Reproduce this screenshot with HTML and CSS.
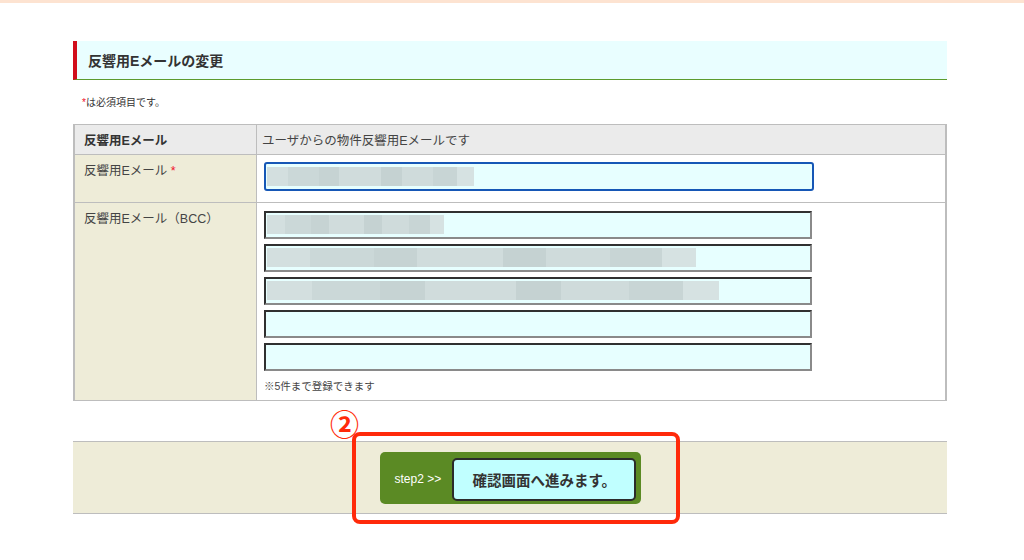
FILE: index.html
```html
<!DOCTYPE html>
<html lang="ja">
<head>
    <meta charset="UTF-8">
    <meta name="viewport" content="width=device-width, initial-scale=1.0">
    <title>反響用Eメールの変更</title>
    <link rel="stylesheet" href="styles.css">
</head>
<body>
    <div class="top-band"></div>
    <div class="page">
        <h2 class="section-title">反響用Eメールの変更</h2>
        <p class="note"><span class="req">*</span>は必須項目です。</p>

        <table class="form-table">
            <tr class="head-row">
                <th>反響用Eメール</th>
                <td>ユーザからの物件反響用Eメールです</td>
            </tr>
            <tr class="main-row">
                <th>反響用Eメール <span class="req">*</span></th>
                <td>
                    <div class="field focused"><span class="blur" style="width: 207px"></span></div>
                </td>
            </tr>
            <tr>
                <th>反響用Eメール（BCC）</th>
                <td>
                    <div class="bcc-list">
                        <div class="field"><span class="blur" style="width: 177px"></span></div>
                        <div class="field"><span class="blur" style="width: 429px"></span></div>
                        <div class="field"><span class="blur" style="width: 452px"></span></div>
                        <div class="field"></div>
                        <div class="field"></div>
                    </div>
                    <p class="small">※5件まで登録できます</p>
                </td>
            </tr>
        </table>

        <div class="submit-area">
            <div class="step-box">
                <span class="step-label">step2 &gt;&gt;</span>
                <button class="confirm-btn">確認画面へ進みます。</button>
            </div>
        </div>

        <!-- annotation -->
        <span class="mark-num">②</span>
        <div class="mark-box"></div>
    </div>
</body>
</html>
```

FILE: styles.css
```css
body {
    margin: 0;
    background-color: #fff;
    color: #333;
    font-family: "Liberation Sans", "Noto Sans CJK JP", sans-serif;
}

.top-band {
    height: 3px;
    background-color: #fde3d1;
}

.page {
    position: relative;
    width: 874px;
    margin-left: 73px;
    padding-top: 38px;
    padding-bottom: 40px;
}

.section-title {
    margin: 0;
    height: 38px;
    line-height: 40px;
    padding-left: 11px;
    font-size: 14px;
    font-weight: bold;
    color: #333;
    background-color: #e9feff;
    border-left: 4px solid #d10d1b;
    border-bottom: 1px solid #5c9b2d;
}

.note {
    margin: 15px 0 0 9px;
    font-size: 10px;
    line-height: 16px;
    color: #333;
}

.req {
    color: #f0102a;
}

.form-table {
    width: 100%;
    margin-top: 13px;
    border-collapse: collapse;
    font-size: 12.5px;
    border-left: 2px solid #bdbdbd;
    border-right: 2px solid #bdbdbd;
}

.form-table th,
.form-table td {
    border: 1px solid #bdbdbd;
    text-align: left;
    vertical-align: top;
}

.form-table th {
    width: 163px;
    padding: 5px 9px 0 9px;
    font-weight: normal;
    background-color: #eeecd8;
    color: #444;
}

.form-table td {
    padding: 7px 8px 7px 7px;
    background-color: #fff;
}

.main-row td {
    padding-bottom: 11px;
}

.head-row th,
.head-row td {
    height: 29px;
    padding: 0 9px;
    vertical-align: middle;
    background-color: #ebebeb;
}

.head-row th {
    font-weight: bold;
    color: #333;
}

.head-row td {
    padding-left: 5px;
    color: #444;
}

.field {
    box-sizing: border-box;
    width: 548px;
    height: 28px;
    padding: 2px 1px;
    background-color: #e7ffff;
    border: 2px solid #303030;
    border-right-color: #8a8a8a;
    border-bottom-color: #8a8a8a;
}

.field.focused {
    width: 550px;
    height: 29px;
    padding-top: 3px;
    border: 2px solid #1657b6;
    border-radius: 3px;
}

.blur {
    display: block;
    height: 19px;
    background: linear-gradient(to right,
        #d3dfdf 0 10%, #cbd8d8 10% 25%, #c6d3d3 25% 35%, #d0dcdc 35% 55%,
        #c5d2d2 55% 65%, #cfdbdb 65% 80%, #c8d5d5 80% 92%, #d6e2e2 92% 100%);
}

.bcc-list {
    display: flex;
    flex-direction: column;
    gap: 5px;
    padding-top: 1px;
}

.small {
    margin: 8px 0 0 0;
    font-size: 10.5px;
    line-height: 14px;
    color: #444;
}

.submit-area {
    margin-top: 40px;
    height: 71px;
    display: flex;
    justify-content: center;
    align-items: center;
    background-color: #eeecd8;
    border-top: 1px solid #bdbdbd;
    border-bottom: 1px solid #bdbdbd;
}

.step-box {
    display: flex;
    align-items: center;
    gap: 11px;
    width: 261px;
    height: 52px;
    box-sizing: border-box;
    padding: 6px 5px 3px 15px;
    background-color: #5b8a24;
    border-radius: 5px;
}

.step-label {
    flex-shrink: 0;
    white-space: nowrap;
    font-size: 12px;
    color: #fff;
}

.confirm-btn {
    flex-shrink: 0;
    width: 184px;
    height: 43px;
    background-color: #c0ffff;
    border: 2px solid #2b2b2b;
    border-radius: 5px;
    font-family: "Liberation Sans", "Noto Sans CJK JP", sans-serif;
    font-size: 14.5px;
    font-weight: bold;
    color: #333;
    cursor: pointer;
}

.mark-num {
    position: absolute;
    left: 257px;
    top: 405px;
    font-family: "Noto Sans CJK JP", sans-serif;
    font-size: 29px;
    font-weight: bold;
    line-height: 30px;
    color: #ff2a0a;
}

.mark-box {
    position: absolute;
    left: 279px;
    top: 429px;
    width: 320px;
    height: 84px;
    border: 4px solid #ff2a0a;
    border-radius: 8px;
}
```
